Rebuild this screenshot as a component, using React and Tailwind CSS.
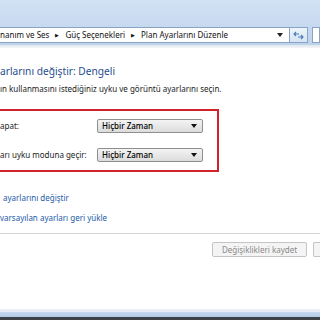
import React from 'react';

// Win7 power plan editor, cropped view
function Dropdown({ value }) {
  return (
    <div className="flex items-center justify-between w-[106px] h-[14px] pl-[4px] pr-[5px] border border-[#8f8f8f] rounded-[2px] bg-gradient-to-b from-[#f4f4f4] to-[#dcdcdc]">
      <span className="text-[8px] font-medium text-black leading-none">{value}</span>
      <svg width="6" height="4" viewBox="0 0 6 4">
        <path d="M0 0h6L3 4z" fill="#111" />
      </svg>
    </div>
  );
}

export default function App() {
  return (
    <div
      className="w-[320px] h-[320px] overflow-hidden flex flex-col bg-white text-[#222]"
      style={{ fontFamily: '"Noto Sans", "Open Sans", sans-serif' }}
    >
      {/* Window frame with address bar */}
      <div className="h-[45px] shrink-0 bg-gradient-to-b from-[#d3e2f4] to-[#bdd3ec] flex items-start pt-[27px]">
        <div className="flex items-center w-[290px] h-[16px] bg-white border-y border-r border-[#8aa3c2]">
          <div className="flex-1 flex items-center gap-[6px] text-[8px] text-[#111] whitespace-nowrap leading-none">
            <span>nanım ve Ses</span>
            <span className="text-[5px]">▶</span>
            <span>Güç Seçenekleri</span>
            <span className="text-[5px]">▶</span>
            <span>Plan Ayarlarını Düzenle</span>
          </div>
          <svg width="6" height="4" viewBox="0 0 6 4" className="mr-[6px]">
            <path d="M0 0h6L3 4z" fill="#222" />
          </svg>
        </div>
        <div className="w-[18px] h-[16px] flex items-center justify-center border-y border-r border-[#8aa3c2] bg-gradient-to-b from-[#eef4fb] to-[#d6e4f3]">
          <svg width="11" height="9" viewBox="0 0 11 9" fill="none" stroke="#4a7ab8" strokeWidth="1.1">
            <path d="M1 3h5M3 1L1 3l2 2" />
            <path d="M10 6H5M8 4l2 2-2 2" />
          </svg>
        </div>
        <div className="ml-[4px] flex-1 h-[16px] bg-white border border-[#8aa3c2]" />
      </div>
      <div className="h-[3px] shrink-0 bg-gradient-to-b from-[#dfe6ee] to-[#f4f6f8]" />

      {/* Content */}
      <div className="flex-1 flex flex-col">
        <div className="mt-[18px] text-[10.2px] text-[#1f4f8f] leading-none whitespace-nowrap">
          arlarını değiştir: Dengeli
        </div>
        <div className="mt-[9px] text-[8px] leading-none whitespace-nowrap">
          ın kullanmasını istediğiniz uyku ve görüntü ayarlarını seçin.
        </div>

        {/* Highlighted settings box */}
        <div className="mt-[16px] -ml-[2px] w-[221px] h-[63px] border-2 border-[#d2232a] flex flex-col justify-center gap-[15px]">
          <div className="flex items-center">
            <span className="w-[97px] text-[8px] leading-none">apat:</span>
            <Dropdown value="Hiçbir Zaman" />
          </div>
          <div className="flex items-center">
            <span className="w-[97px] text-[8px] leading-none whitespace-nowrap">arı uyku moduna geçir:</span>
            <Dropdown value="Hiçbir Zaman" />
          </div>
        </div>

        {/* Links */}
        <div className="mt-[22px] pl-[3px] text-[8px] text-[#1c5aa8] leading-none">ayarlarını değiştir</div>
        <div className="mt-[12px] text-[8px] text-[#1c5aa8] leading-none">varsayılan ayarları geri yükle</div>

        <div className="mt-[11px] h-px bg-[#d6d6d6]" />

        {/* Buttons */}
        <div className="mt-[8px] flex justify-end gap-[6px]">
          <div className="w-[95px] h-[15px] flex items-center justify-center border border-[#c4c4c4] rounded-[2px] bg-[#f4f4f4] text-[8px] text-[#8a8a8a] leading-none">
            Değişiklikleri kaydet
          </div>
          <div className="w-[7px] h-[15px] border-y border-l border-[#c4c4c4] rounded-l-[2px] bg-[#f4f4f4]" />
        </div>
      </div>

      {/* Bottom frame */}
      <div className="h-[3px] shrink-0 bg-[#e9eef4]" />
      <div className="h-[5px] shrink-0 bg-gradient-to-b from-[#c6daf0] to-[#b3cbe6]" />
      <div className="h-[3px] shrink-0 bg-[#3e4248]" />
    </div>
  );
}
